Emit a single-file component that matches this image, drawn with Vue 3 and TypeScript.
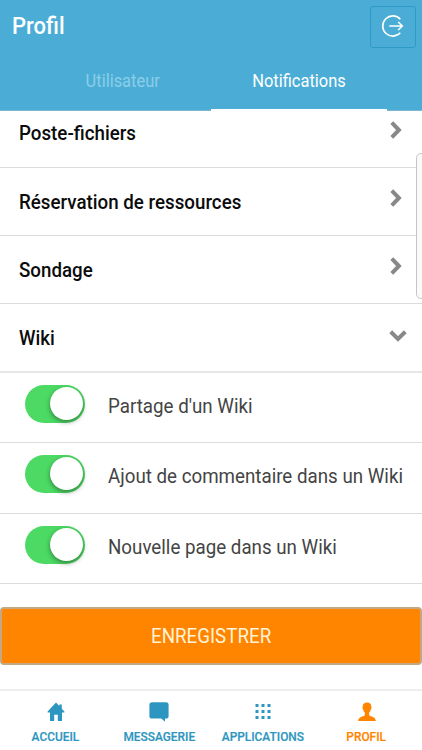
<script setup lang="ts">
import { ref } from 'vue'

interface Section { label: string; open: boolean }
interface Preference { label: string; enabled: boolean }

const sections = ref<Section[]>([
  { label: 'Poste-fichiers', open: false },
  { label: 'Réservation de ressources', open: false },
  { label: 'Sondage', open: false },
  { label: 'Wiki', open: true },
])

const preferences = ref<Preference[]>([
  { label: "Partage d'un Wiki", enabled: true },
  { label: 'Ajout de commentaire dans un Wiki', enabled: true },
  { label: 'Nouvelle page dans un Wiki', enabled: true },
])
</script>

<template>
  <div class="screen">
    <header class="header">
      <div class="titlebar">
        <h1 class="title">Profil</h1>
        <button class="logout" aria-label="Déconnexion">
          <svg width="24" height="24" viewBox="0 0 24 24" fill="none" stroke="#fff" stroke-width="1.6">
            <path d="M19.3 5.2A10.1 10.1 0 1 0 19.3 18.8" />
            <path d="M8.3 12H21M17.2 8L21.3 12L17.2 16" />
          </svg>
        </button>
      </div>
      <nav class="tabs">
        <a class="tab tab-user"><span>Utilisateur</span></a>
        <a class="tab tab-active"><span>Notifications</span></a>
      </nav>
    </header>

    <main class="content">
      <div v-for="s in sections" :key="s.label" class="section" :class="{ open: s.open }" @click="s.open = !s.open">
        <span class="section-label">{{ s.label }}</span>
        <svg v-if="s.open" class="chevron" width="18" height="12" viewBox="0 0 18 12" fill="none" stroke="#888" stroke-width="4">
          <path d="M1.7 1.8L9 8.9L16.3 1.8" />
        </svg>
        <svg v-else class="chevron" width="12" height="18" viewBox="0 0 12 18" fill="none" stroke="#888" stroke-width="4">
          <path d="M1.8 1.7L8.9 9L1.8 16.3" />
        </svg>
      </div>
      <label v-for="p in preferences" :key="p.label" class="preference">
        <span class="toggle" :class="{ on: p.enabled }" @click="p.enabled = !p.enabled"><span class="knob"></span></span>
        <span class="preference-label">{{ p.label }}</span>
      </label>
      <button class="save"><span>ENREGISTRER</span></button>
      <div class="scroll-thumb"></div>
    </main>

    <footer class="tabbar">
      <a class="item">
        <svg width="18" height="20" viewBox="0 0 18 20" fill="currentColor">
          <path d="M9 .4L0.6 9.6V10.6H3V19H7.2V12.8H10.8V19H15V10.6H17.4V9.6L14.8 6.8V2.6H12.3V4Z" />
        </svg>
        <span class="item-label">ACCUEIL</span>
      </a>
      <a class="item">
        <svg width="20" height="20" viewBox="0 0 20 20" fill="currentColor">
          <path d="M3 0.2H17Q19.6 .2 19.6 3V14Q19.6 16.6 17 16.6H16V19.8L12.3 16.6H3Q.4 16.6 .4 14V3Q.4 .2 3 .2Z" />
        </svg>
        <span class="item-label">MESSAGERIE</span>
      </a>
      <a class="item">
        <svg width="16" height="20" viewBox="0 0 16 20" fill="currentColor">
          <path d="M.5 2h3v3h-3zM6.5 2h3v3h-3zM12.5 2h3v3h-3zM.5 8h3v3h-3zM6.5 8h3v3h-3zM12.5 8h3v3h-3zM.5 14h3v3h-3zM6.5 14h3v3h-3zM12.5 14h3v3h-3z" />
        </svg>
        <span class="item-label">APPLICATIONS</span>
      </a>
      <a class="item current">
        <svg width="18" height="20" viewBox="0 0 18 20" fill="currentColor">
          <path d="M9 .4C6 .4 4.6 2 4.7 4.7C4.3 5 4.4 7 5.2 7.4C5.5 9 6.1 9.8 6.8 10.4V13.3C5.5 14.8.3 14.6.2 19H17.8C17.7 14.6 12.5 14.8 11.2 13.3V10.4C11.9 9.8 12.5 9 12.8 7.4C13.6 7 13.7 5 13.3 4.7C13.4 2 12 .4 9 .4Z" />
        </svg>
        <span class="item-label">PROFIL</span>
      </a>
    </footer>
  </div>
</template>

<style>
body { margin: 0; background: #fff; }
</style>

<style scoped>
.screen { width: 422px; height: 750px; display: flex; flex-direction: column; overflow: hidden; background: #fff; font-family: Roboto, "Liberation Sans", sans-serif; }
.screen * { box-sizing: border-box; }
.header { flex: none; height: 111px; display: flex; flex-direction: column; justify-content: space-between; background: #4badd6; border-bottom: 1px solid #7fb5d0; position: relative; }
.titlebar { display: flex; justify-content: space-between; padding: 6px 6px 0 12px; }
.title { margin: 6px 0 0; font-size: 23.5px; line-height: 28px; font-weight: 500; color: #fff; transform: scaleX(.937); transform-origin: left; }
.logout { width: 46px; height: 42px; padding: 0 0 2px 0; display: flex; align-items: center; justify-content: center; background: transparent; border: 1px solid #2d9bc6; border-radius: 3px; }
.tabs { display: flex; padding-left: 35px; margin-bottom: -1px; }
.tab { width: 176px; height: 60px; padding-top: 20px; line-height: 20px; font-size: 17.6px; text-align: center; color: #fff; border-bottom: 2px solid transparent; }
.tab span { display: inline-block; transform: scaleX(.935); }
.tab-user { color: #8bcde8; }
.tab-active { border-bottom-color: #fff; }
.content { flex: 1; position: relative; display: flex; flex-direction: column; }
.section { flex: none; height: 68.2px; display: flex; align-items: center; justify-content: space-between; padding: 0 20px 0 19px; border-bottom: 1px solid #dcdcdc; color: #0b0b0b; font-size: 20px; font-weight: 500; }
.section:first-child { margin-top: -11.2px; clip-path: inset(11.2px 0 0 0); }
.section.open { padding-right: 15px; border-bottom: 2px solid #e6e6e6; height: 68.6px; }
.section-label, .preference-label { transform: scaleX(.937); transform-origin: left; white-space: nowrap; }
.chevron { margin-top: -7px; }
.section.open .chevron { margin-top: -3px; }
.preference { flex: none; height: 70.5px; display: flex; align-items: center; padding: 0 0 3px 25px; border-bottom: 1px solid #dcdcdc; font-size: 20px; color: #444; }
.preference-label { margin-top: -.5px; }
.toggle { width: 60px; height: 38px; flex: none; margin: -5px 23px 0 0; padding: 2px; border-radius: 19px; background: #ccc; display: flex; }
.toggle.on { background: #4cd964; justify-content: flex-end; }
.knob { width: 33px; height: 33px; border-radius: 50%; background: #fff; box-shadow: 0 2px 5px rgba(0, 0, 0, .4); }
.save { flex: none; height: 58px; margin: 23px 0 0; padding: 0; background: #ff8500; border: 2px solid #c3a883; border-radius: 4px; color: #fff3d8; font: 400 20px Roboto, sans-serif; }
.save span { display: inline-block; transform: scaleX(.937); }
.scroll-thumb { position: absolute; top: 42px; right: -4px; width: 10px; height: 146px; border: 1px solid #c6c6c6; border-radius: 5px; background: #fafafa; }
.tabbar { flex: none; height: 61px; display: flex; padding: 0 4px; border-top: 2px solid #eee; background: #fff; }
.item { width: 103.6px; flex: none; display: flex; flex-direction: column; align-items: center; padding-top: 11px; color: #2c96c0; }
.item.current { color: #ff8500; }
.item-label { margin-top: 6.5px; font-size: 12.7px; line-height: 16px; font-weight: 500; transform: scaleX(.937); -webkit-text-stroke: .2px currentColor; }
</style>
